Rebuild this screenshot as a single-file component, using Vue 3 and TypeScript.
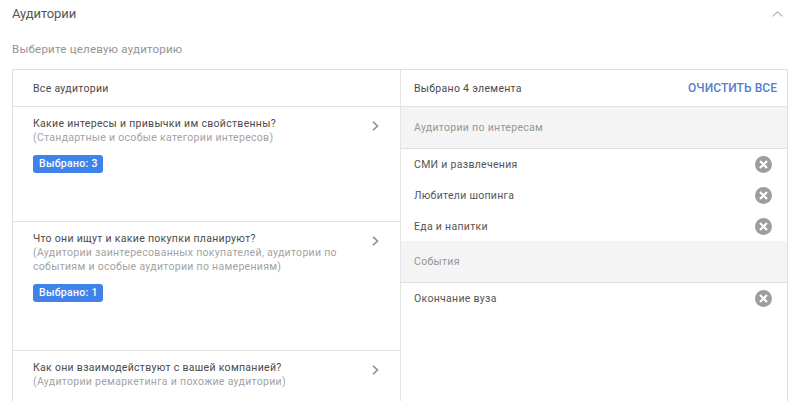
<script setup lang="ts">
interface Cat { q: string; sub: string[]; badge?: string; h: number }
const cats: Cat[] = [
  { q: 'Какие интересы и привычки им свойственны?', sub: ['(Стандартные и особые категории интересов)'], badge: 'Выбрано: 3', h: 115 },
  { q: 'Что они ищут и какие покупки планируют?', sub: ['(Аудитории заинтересованных покупателей, аудитории по', 'событиям и особые аудитории по намерениям)'], badge: 'Выбрано: 1', h: 129 },
  { q: 'Как они взаимодействуют с вашей компанией?', sub: ['(Аудитории ремаркетинга и похожие аудитории)'], h: 60 },
]
const groups = [
  { name: 'Аудитории по интересам', items: ['СМИ и развлечения', 'Любители шопинга', 'Еда и напитки'] },
  { name: 'События', items: ['Окончание вуза'] },
]
</script>

<template>
  <div class="page">
    <div class="head">
      <span class="title">Аудитории</span>
      <svg class="up" width="11" height="6" viewBox="0 0 11 6"><path d="M.7 5.4L5.5.9l4.8 4.5" fill="none" stroke="#b4b4b4" stroke-width="1.3" /></svg>
    </div>
    <div class="hint">Выберите целевую аудиторию</div>
    <div class="panel">
      <div class="col left">
        <div class="colhead">Все аудитории</div>
        <div v-for="c in cats" :key="c.q" class="cat" :style="{ height: c.h + 'px' }">
          <div class="cattext">
            <div class="q">{{ c.q }}</div>
            <div v-for="s in c.sub" :key="s" class="sub">{{ s }}</div>
            <span v-if="c.badge" class="badge">{{ c.badge }}</span>
          </div>
          <svg class="chev" width="7" height="10" viewBox="0 0 7 10"><path d="M1 .8L5.5 5 1 9.2" fill="none" stroke="#8f8f8f" stroke-width="1.6" /></svg>
        </div>
      </div>
      <div class="col right">
        <div class="colhead between">
          <span>Выбрано 4 элемента</span>
          <span class="clear">ОЧИСТИТЬ ВСЕ</span>
        </div>
        <template v-for="g in groups" :key="g.name">
          <div class="group">{{ g.name }}</div>
          <div class="items">
            <div v-for="i in g.items" :key="i" class="item">
              <span>{{ i }}</span>
              <svg width="17" height="17" viewBox="0 0 17 17"><circle cx="8.5" cy="8.5" r="8.5" fill="#9e9e9e" /><path d="M5 5l7 7m0-7l-7 7" stroke="#fff" stroke-width="2.2" /></svg>
            </div>
          </div>
        </template>
      </div>
    </div>
  </div>
</template>

<style>
html, body { margin: 0; background: #fff; overflow: hidden; }
</style>

<style scoped>
.page { width: 800px; height: 401px; overflow: hidden; box-sizing: border-box; padding: 0 12px; font-family: Roboto, "Noto Sans", sans-serif; font-size: 10.5px; letter-spacing: 0.3px; color: #4a4a4a; }
.head { height: 27px; display: flex; align-items: center; justify-content: space-between; padding-right: 5px; }
.title { font-size: 13px; letter-spacing: -0.1px; color: #555; }
.hint { margin-top: 15px; height: 14px; line-height: 14px; font-size: 11.5px; letter-spacing: 0.22px; color: #949494; }
.panel { margin-top: 13px; display: flex; border: 1px solid #dedede; border-bottom: 0; height: 340px; }
.col { box-sizing: border-box; }
.left { width: 388px; border-right: 1px solid #e4e4e4; }
.right { flex: 1; }
.colhead { height: 37px; box-sizing: border-box; border-bottom: 1px solid #e2e2e2; display: flex; align-items: center; padding-left: 20px; }
.between { justify-content: space-between; padding: 0 10px 0 13px; }
.clear { font-size: 12px; font-weight: 500; letter-spacing: 0.05px; color: #5580cc; }
.cat { box-sizing: border-box; border-bottom: 1px solid #e2e2e2; padding: 10px 20px; display: flex; justify-content: space-between; }
.cattext { display: flex; flex-direction: column; align-items: flex-start; }
.q { line-height: 14px; color: #4a4a4a; }
.sub { line-height: 14px; color: #a3a3a3; }
.chev { margin: 4px 1px 0 0; }
.badge { margin-top: 10px; height: 18px; line-height: 18px; padding: 0 5px 0 6px; border-radius: 3px; background: #3f83ea; color: #fff; font-weight: 500; letter-spacing: 0.3px; }
.group { height: 42px; box-sizing: border-box; background: #f4f4f4; border-bottom: 1px solid #e0e0e0; padding-left: 13px; display: flex; align-items: center; color: #969696; }
.items { margin-bottom: -1px; }
.item { height: 31px; display: flex; align-items: center; justify-content: space-between; padding: 0 15px 0 13px; color: #555; }
</style>
